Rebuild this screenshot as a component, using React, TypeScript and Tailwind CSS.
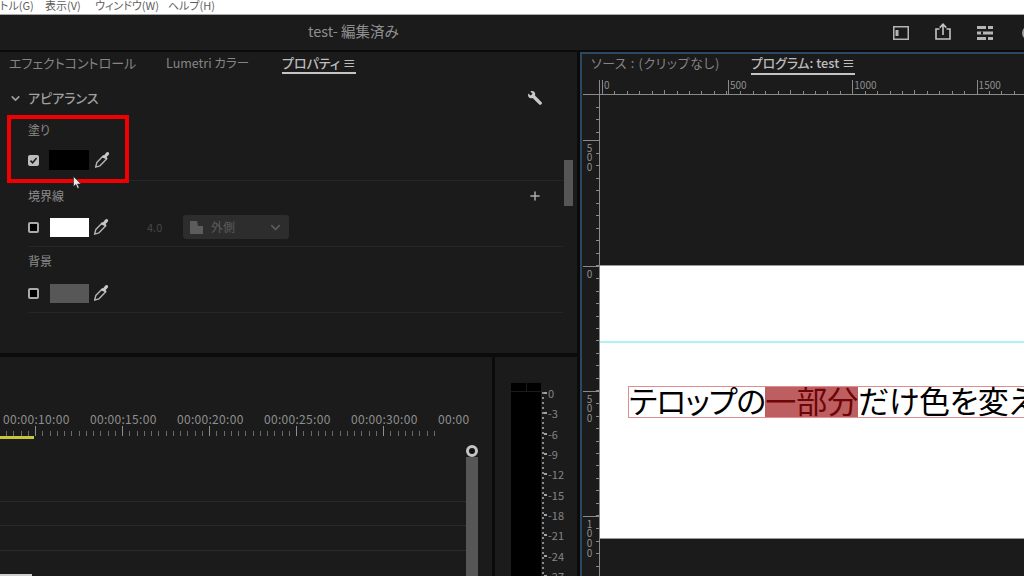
import { Plus, ChevronDown } from 'lucide-react';

const timeLabels = ['00:00:10:00', '00:00:15:00', '00:00:20:00', '00:00:25:00', '00:00:30:00', '00:00'];
const meterLabels = ['0', '-3', '-6', '-9', '-12', '-15', '-18', '-21', '-24', '-27'];

function Eyedropper() {
  return (
    <svg width="16" height="18" viewBox="0 0 16 18" fill="none" className="shrink-0">
      <path d="M9.6 4.6 2.8 11.6 1.6 16.2l4.4-1.4 7-7.2" stroke="#b5b5b5" strokeWidth="1.4" strokeLinejoin="round" />
      <path d="M8.6 5 10.4 4l1.9-2.4c.8-.8 2.1-.7 2.6.1.5.8.2 1.7-.4 2.3L12.6 6l1 1.4-1.1.9L7.6 6.2 8.6 5Z" fill="#c8c8c8" />
    </svg>
  );
}

function WrenchIcon() {
  return (
    <svg width="16" height="16" viewBox="0 0 16 16" className="shrink-0">
      <path d="M1.2 3.4 3.6 5.6 5.6 3.8 3.4 1.4C5.4.6 7.6 1.4 8.1 3.4c.2.8.1 1.4-.1 2l6.6 6.8c.5.5.5 1.3 0 1.8l-.6.6c-.5.5-1.3.5-1.8 0L5.6 8C4.8 8.3 3.9 8.3 3 8 1.4 7.4.6 5.4 1.2 3.4Z" fill="#c8c8c8" />
    </svg>
  );
}

function Check({ checked }: { checked?: boolean }) {
  if (checked) {
    return (
      <div className="w-[11px] h-[11px] rounded-[2px] bg-[#bdbdbd] flex items-center justify-center shrink-0">
        <svg width="9" height="9" viewBox="0 0 9 9" fill="none">
          <path d="M1.5 4.6 3.6 6.8 7.6 2" stroke="#1b1b1b" strokeWidth="1.6" />
        </svg>
      </div>
    );
  }
  return <div className="w-[11px] h-[11px] rounded-[2px] border-2 border-[#aaaaaa] bg-black shrink-0" />;
}

function Label({ text }: { text: string }) {
  return <div className="h-[14px] leading-[14px] text-[12px] text-[#8c8c8c]">{text}</div>;
}

function HorizontalRuler() {
  return (
    <div className="h-[15px] shrink-0 flex ml-[1px] border-b border-[#8a8a8a]">
      <div className="w-[17px] shrink-0 border-r border-[#8a8a8a]" />
      {['0', '500', '1000', '1500'].map((label, n) => (
        <div key={label} className={`${n === 0 ? 'w-[126px] ml-[2px]' : 'w-[124.3px]'} shrink-0 relative border-l border-[#8a8a8a]`}>
          <span className="absolute left-[1px] top-[-2px] text-[10px] leading-[13px] text-[#8f8f8f]">{label}</span>
          <div className="absolute bottom-0 left-0 right-0 flex items-end">
            {Array.from({ length: 10 }).map((_, i) => (
              <div key={i} className="w-[12.43px] shrink-0 h-[3px] flex justify-end">
                <div className={`w-px ${i === 4 ? 'h-[4px] -mt-px' : 'h-[3px]'} bg-[#8a8a8a]`} />
              </div>
            ))}
          </div>
        </div>
      ))}
    </div>
  );
}

function RulerTicks({ count }: { count: number }) {
  return (
    <div className="flex flex-col items-end">
      {Array.from({ length: count }).map((_, i) => (
        <div key={i} className="h-[12.5px] flex items-end">
          <div className="w-[3px] h-px bg-[#8a8a8a]" />
        </div>
      ))}
    </div>
  );
}

function VerticalRulerSegment({ label, height }: { label: string; height: string }) {
  return (
    <div className={`${height} shrink-0 flex justify-between border-t border-[#8a8a8a]`}>
      <div className="pl-[1px] pt-[2px] text-[10px] leading-[10px] tracking-[-0.4px] text-[#8f8f8f] [writing-mode:vertical-rl] [text-orientation:upright]">
        {label}
      </div>
      <RulerTicks count={10} />
    </div>
  );
}

function Timeline() {
  return (
    <div className="w-[492px] shrink-0 bg-[#1b1b1b] flex flex-col pt-[55px]">
      <div className="flex h-[14px] pl-[3px]">
        {timeLabels.map((label) => (
          <div key={label} className="w-[87px] shrink-0 text-[12px] leading-[14px] tracking-[0.3px] text-[#8f8f8f]">
            {label}
          </div>
        ))}
      </div>
      <div className="h-[10px] pl-[6px] flex items-end">
        {Array.from({ length: 60 }).map((_, i) => (
          <div key={i} className="w-[7.25px] shrink-0">
            <div className={`w-px ${(i - 4) % 12 === 0 ? 'h-[10px] bg-[#8f8f8f]' : 'h-[5px] bg-[#6b6b6b]'}`} />
          </div>
        ))}
      </div>
      <div className="w-[34px] h-[3px] bg-[#c9c83c]" />
      <div className="flex-1 flex pr-[14px] min-h-0">
        <div className="flex-1 flex flex-col pt-[62px]">
          <div className="h-[24px] border-t border-[#2a2a2a]" />
          <div className="h-[25px] border-t border-[#2a2a2a]" />
          <div className="h-[24px] border-t border-[#2a2a2a]" />
          <div className="w-[32px] flex-1 bg-[#cfcfcf]" />
        </div>
        <div className="w-[12px] flex flex-col pt-[6px]">
          <div className="w-[12px] h-[12px] rounded-full border-[3px] border-[#c4c4c4] bg-[#111111]" />
          <div className="flex-1 bg-[#565656]" />
        </div>
      </div>
    </div>
  );
}

function Meter() {
  return (
    <div className="flex-1 bg-[#1b1b1b] flex pt-[26px] pl-[16px]">
      <div className="w-[30px] flex flex-col">
        <div className="h-[8px] flex gap-px">
          <div className="flex-1 bg-black" />
          <div className="flex-1 bg-black" />
        </div>
        <div className="flex-1 mt-px bg-black" />
      </div>
      <div className="w-[2px] ml-[1px] mt-[9px] bg-[repeating-linear-gradient(to_bottom,#8a8a8a_0,#8a8a8a_2px,transparent_2px,transparent_5px)]" />
      <div className="flex flex-col">
        {meterLabels.map((label) => (
          <div key={label} className="h-[20.33px] shrink-0 flex items-center gap-[1px] text-[11px] text-[#858585]">
            <div className="w-[3px] h-[2px] bg-[#a0a0a0]" />
            <span>{label}</span>
          </div>
        ))}
      </div>
    </div>
  );
}

export default function App() {
  return (
    <div className="w-[1024px] h-[576px] overflow-hidden bg-[#0b0b0b] flex flex-col font-['Noto_Sans_CJK_JP',sans-serif] [font-feature-settings:'palt']">
      {/* os menu, cut off at the top of the frame */}
      <div className="h-[15px] shrink-0 bg-white border-b border-[#a8a8a8] overflow-hidden flex whitespace-nowrap text-[11px] leading-[10px] text-[#5f5f5f]">
        <span className="w-[45px]">トル(G)</span>
        <span className="w-[50px]">表示(V)</span>
        <span className="w-[73px]">ウィンドウ(W)</span>
        <span>ヘルプ(H)</span>
      </div>

      {/* title bar */}
      <div className="h-[35px] shrink-0 bg-[#1b1b1b] flex items-center pl-[308px] overflow-hidden">
        <div className="w-[585px] shrink-0 -mt-[3px] text-[14.5px] text-[#8f8f8f]">test- 編集済み</div>
        <svg width="16" height="14" viewBox="0 0 16 14" fill="none" className="shrink-0">
          <rect x="0.75" y="0.75" width="14.5" height="12.5" stroke="#b5b5b5" strokeWidth="1.5" />
          <rect x="2.5" y="4" width="3" height="6" fill="#b5b5b5" />
        </svg>
        <svg width="16" height="17" viewBox="0 0 16 17" fill="none" className="shrink-0 ml-[26px] -mt-[2px]">
          <path d="M4.5 6H1v10h14V6h-3.5" stroke="#c4c4c4" strokeWidth="1.6" />
          <path d="M8 12V2M4.8 4.6 8 1.2l3.2 3.4" stroke="#c4c4c4" strokeWidth="1.6" />
        </svg>
        <svg width="16" height="14" viewBox="0 0 16 14" className="shrink-0 ml-[26px]">
          <rect x="0" y="0" width="16" height="3" fill="#b5b5b5" />
          <rect x="0" y="5.5" width="16" height="3" fill="#b5b5b5" />
          <rect x="0" y="11" width="16" height="3" fill="#b5b5b5" />
          <rect x="9" y="0" width="2" height="3" fill="#1b1b1b" />
          <rect x="4" y="5.5" width="2" height="3" fill="#1b1b1b" />
          <rect x="9" y="11" width="2" height="3" fill="#1b1b1b" />
        </svg>
        <div className="w-[14px] h-[14px] rounded-full border-2 border-[#a0a0a0] ml-[29px] shrink-0" />
      </div>

      <div className="flex-1 min-h-0 flex mt-[2px] gap-[3px]">
        <div className="w-[577px] shrink-0 flex flex-col gap-[4px]">
          {/* properties panel */}
          <div className="relative h-[301px] shrink-0 bg-[#1b1b1b] flex flex-col">
            <div className="flex h-[23px] pl-[9px] pt-[3px] text-[13px] leading-[16px] text-[#858585]">
              <span className="w-[157px]">エフェクトコントロール</span>
              <span className="w-[116px] text-[12.5px]">Lumetri カラー</span>
              <span className="h-[19px] border-b-2 border-[#c4c4c4] text-[#bcbcbc] font-medium whitespace-nowrap">プロパティ ≡</span>
            </div>
            <div className="h-[16px] mt-[15px] pl-[9px] pr-[34px] flex items-center text-[13px] font-medium text-[#a0a0a0]">
              <ChevronDown size={13} strokeWidth={3} className="text-[#a0a0a0]" />
              <span className="ml-[6px] flex-1">アピアランス</span>
              <WrenchIcon />
            </div>
            <div className="pl-[28px] pr-[14px] mt-[17px]">
              <Label text="塗り" />
              <div className="flex items-center h-[20px] mt-[13px]">
                <Check checked />
                <div className="w-[40px] h-[20px] ml-[10px] bg-black" />
                <div className="ml-[5px]"><Eyedropper /></div>
              </div>
              <div className="h-px mt-[10px] bg-[#262626]" />
              <div className="flex items-center justify-between pr-[21px] mt-[8px]">
                <Label text="境界線" />
                <Plus size={14} strokeWidth={2.5} className="text-[#b0b0b0]" />
              </div>
              <div className="flex items-center h-[24px] mt-[12px]">
                <Check />
                <div className="w-[39px] h-[19px] ml-[11px] bg-white" />
                <div className="ml-[4px]"><Eyedropper /></div>
                <span className="ml-[38px] w-[36px] text-[11px] text-[#484848]">4.0</span>
                <div className="w-[106px] h-[24px] rounded-[3px] bg-[#2d2d2d] flex items-center pl-[7px] pr-[6px] text-[12px] text-[#5c5c5c]">
                  <svg width="13" height="13" viewBox="0 0 13 13" className="shrink-0">
                    <path d="M0 0h7l1 5h5v8H0z" fill="#5c5c5c" />
                  </svg>
                  <span className="ml-[8px] flex-1">外側</span>
                  <ChevronDown size={15} strokeWidth={2.5} />
                </div>
              </div>
              <div className="h-px mt-[7px] bg-[#262626]" />
              <div className="mt-[7px]"><Label text="背景" /></div>
              <div className="flex items-center h-[20px] mt-[15px]">
                <Check />
                <div className="w-[39px] h-[19px] ml-[11px] bg-[#575757]" />
                <div className="ml-[4px]"><Eyedropper /></div>
              </div>
              <div className="h-px mt-[9px] bg-[#262626]" />
            </div>

            {/* scrollbar thumb */}
            <div className="absolute left-[564px] top-[108px] w-[9px] h-[46px] bg-[#565656]" />
            {/* red annotation and pointer on top of the panel */}
            <div className="absolute left-[7px] top-[63px] w-[122px] h-[68px] border-[4px] border-[#f00000]" />
            <svg width="9" height="13" viewBox="0 0 9 13" className="absolute left-[73px] top-[124px]">
              <path d="M0.5 0.5v10l2.4-2 1.7 4 1.6-.7-1.7-3.8H8Z" fill="#e8e8e8" stroke="#222" strokeWidth="0.6" />
            </svg>
          </div>

          <div className="flex-1 min-h-0 flex gap-[3px]">
            <Timeline />
            <Meter />
          </div>
        </div>

        {/* program monitor */}
        <div className="flex-1 min-w-0 bg-[#1b1b1b] border-l-2 border-t-2 border-[#2a4764] flex flex-col overflow-hidden">
          <div className="flex h-[26px] shrink-0 pl-[9px] pt-[1px] text-[12.8px] leading-[16px] text-[#858585]">
            <span className="w-[160px] tracking-[0.7px]">ソース : (クリップなし)</span>
            <span className="h-[20px] border-b-2 border-[#c4c4c4] text-[#bcbcbc] font-medium whitespace-nowrap">プログラム: test ≡</span>
          </div>
          <HorizontalRuler />
          <div className="flex-1 min-h-0 flex">
            <div className="w-[17px] shrink-0 ml-[1px] border-r border-[#8a8a8a] flex flex-col overflow-hidden">
              <div className="h-[45px] shrink-0 flex justify-end overflow-hidden">
                <RulerTicks count={3} />
              </div>
              <VerticalRulerSegment label="500" height="h-[126px]" />
              <VerticalRulerSegment label="0" height="h-[125px]" />
              <VerticalRulerSegment label="500" height="h-[125px]" />
              <VerticalRulerSegment label="1000" height="h-[125px]" />
            </div>
            <div className="flex-1 min-w-0 pt-[170px] overflow-hidden">
              <div className="h-[274px] bg-white border-y border-[#9a9a9a] pt-[75px]">
                <div className="h-[2px] bg-[#aef3ef]" />
                <div className="mt-[43px] ml-[28px] w-[500px] h-[32px] border border-[#dd8f8f] flex whitespace-nowrap text-[31px] leading-[26px] text-black">
                  <span className="tracking-[-1px]">テロップの</span>
                  <span className="bg-[#bd5f60] text-[#6e0508]">一部分</span>
                  <span className="tracking-[-0.4px]">だけ色を変え</span>
                </div>
              </div>
            </div>
          </div>
        </div>
      </div>
    </div>
  );
}
